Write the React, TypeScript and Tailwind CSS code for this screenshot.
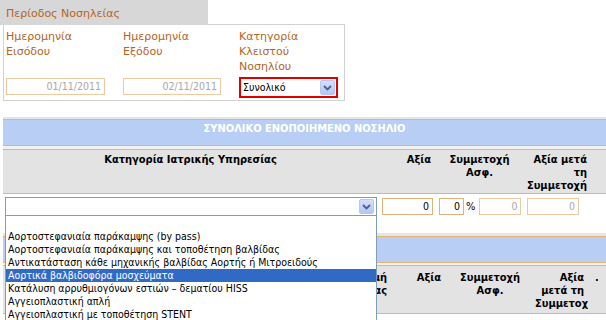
import React from "react";

const condensed = "font-['DejaVu_Sans_Condensed','Liberation_Sans',sans-serif]";

function DropButton() {
  return (
    <div className="flex h-[15px] w-[15px] items-center justify-center rounded-[2px] border border-[#b5c8f2] bg-gradient-to-b from-[#d3e0fd] to-[#b2c7f6]">
      <svg width="9" height="6" viewBox="0 0 9 6">
        <path d="M1 1 L4.5 4.5 L8 1" fill="none" stroke="#4d6185" strokeWidth="1.8" />
      </svg>
    </div>
  );
}

function Field({ value, w, muted }: { value: string; w: string; muted?: boolean }) {
  return (
    <div
      className={`${w} ${condensed} h-[17px] border bg-white pr-[3px] text-right text-[10.5px] leading-[15px] ${
        muted ? "border-[#ecc9a0] text-[#a8a8a8]" : "border-[#e0b27a] text-black"
      }`}
    >
      {value}
    </div>
  );
}

export default function App() {
  const items = [
    "",
    "Αορτοστεφανιαία παράκαμψης (by pass)",
    "Αορτοστεφανιαία παράκαμψης και τοποθέτηση βαλβίδας",
    "Αντικατάσταση κάθε μηχανικής βαλβίδας Αορτής ή Μιτροειδούς",
    "Αορτικά βαλβιδοφόρα μοσχεύματα",
    "Κατάλυση αρρυθμιογόνων εστιών – δεματίου HISS",
    "Αγγειοπλαστική απλή",
    "Αγγειοπλαστική με τοποθέτηση STENT",
  ];

  return (
    <div className="relative h-[320px] w-[606px] overflow-hidden bg-white font-['DejaVu_Sans','Liberation_Sans',sans-serif] text-[11px]">
      {/* period of stay */}
      <div className="flex">
        <div className="h-[25px] w-[208px] bg-[#d7d7d7] pl-[6px] pt-[6px] leading-[15px] text-[#b4641e]">
          Περίοδος Νοσηλείας
        </div>
        <div className="h-[25px] w-[137px] border-b border-[#d2d2d2]" />
      </div>
      <div className="ml-[3px] flex h-[76px] w-[342px] border-x border-b border-[#d2d2d2] pl-[2px] pt-[4px] leading-[15px] text-[#b4641e]">
        <div className="w-[117px]">
          <div className="h-[45px]">
            Ημερομηνία
            <br />
            Εισόδου
          </div>
          <div className="mt-[4px]">
            <Field value="01/11/2011" w="w-[99px]" muted />
          </div>
        </div>
        <div className="w-[116px]">
          <div className="h-[45px]">
            Ημερομηνία
            <br />
            Εξόδου
          </div>
          <div className="mt-[4px]">
            <Field value="02/11/2011" w="w-[98px]" muted />
          </div>
        </div>
        <div className="w-[100px]">
          <div className="h-[45px]">
            Κατηγορία
            <br />
            Κλειστού
            <br />
            Νοσηλίου
          </div>
          <div className="mt-[3px] flex h-[21px] w-[99px] items-center justify-between border-2 border-[#e00000] bg-white pl-[2px] pr-[1px]">
            <span className={`${condensed} text-[10.5px] text-black`}>Συνολικό</span>
            <DropButton />
          </div>
        </div>
      </div>

      {/* table 1 */}
      <div className="ml-[3px] mt-[16px]">
        <div className="h-[2px] bg-[#e6e6e6]" />
        <div
          className={`${condensed} h-[27px] border-y border-[#e8b272] bg-[#b8cef5] pt-[1px] text-center font-bold leading-[15px] text-white`}
        >
          ΣΥΝΟΛΙΚΟ ΕΝΟΠΟΙΗΜΕΝΟ ΝΟΣΗΛΙΟ
        </div>
        <div className="h-[3px] bg-[#f2f2f2]" />
        <div
          className={`${condensed} flex h-[45px] border-y border-[#e8b272] bg-[#e3e3e3] pt-[3px] font-bold leading-[13px] text-black`}
        >
          <div className="w-[375px] text-center">Κατηγορία Ιατρικής Υπηρεσίας</div>
          <div className="w-[58px] pr-[5px] text-right">Αξία</div>
          <div className="w-[87px] text-center">
            Συμμετοχή
            <br />
            Ασφ.
          </div>
          <div className="w-[67px] pr-[3px] text-right">
            Αξία μετά
            <br />
            τη
            <br />
            Συμμετοχή
          </div>
        </div>
        <div className="flex h-[39px] pt-[3px]">
          <div className="w-[375px] pl-[2px]">
            <div className="flex h-[19px] w-[372px] items-center justify-end border border-[#7f9db9] bg-white pr-[2px]">
              <DropButton />
            </div>
          </div>
          <div className="w-[58px] pl-[4px] pt-[1px]">
            <Field value="0" w="w-[51px]" />
          </div>
          <div className="flex w-[87px] items-start pl-[3px] pt-[1px]">
            <Field value="0" w="w-[25px]" />
            <span className={`${condensed} ml-[2px] mr-[4px] leading-[17px] text-black`}>%</span>
            <Field value="0" w="w-[42px]" muted />
          </div>
          <div className="w-[67px] pl-[4px] pt-[1px]">
            <Field value="0" w="w-[52px]" muted />
          </div>
        </div>

        {/* table 2, mostly under the open list */}
        <div className="h-[3px] bg-[#e6e6e6]" />
        <div className="h-[27px] border-y border-[#e8b272] bg-[#b8cef5]" />
        <div className="h-[2px] bg-[#f2f2f2]" />
        <div
          className={`${condensed} flex h-[49px] border-y border-[#e8b272] bg-[#e3e3e3] pt-[5px] font-bold leading-[13px] text-black`}
        >
          <div className="w-[327px]" />
          <div className="w-[59px] pr-[2px] text-right">
            Τιμή
            <br />
            Μονάδας
          </div>
          <div className="w-[56px] pr-[4px] text-right">Αξία</div>
          <div className="w-[90px] text-center">
            Συμμετοχή
            <br />
            Ασφ.
          </div>
          <div className="w-[53px] overflow-hidden pr-[4px] text-right">
            Αξία
            <br />
            μετά τη
            <br />
            Συμμετοχή
          </div>
          <div className="pl-[7px]">.</div>
        </div>
      </div>

      {/* open select list */}
      <div
        className={`${condensed} absolute left-[5px] top-[216px] w-[372px] border-x border-[#7f9db9] bg-white text-[10.5px] leading-[13px] text-black`}
      >
        {items.map((item, i) => (
          <div
            key={i}
            className={`${i === 0 ? "h-[14px]" : "h-[13px]"} whitespace-nowrap pl-[2px] ${
              i === 4 ? "bg-[#316ac5] text-white" : ""
            }`}
          >
            {item}
          </div>
        ))}
      </div>
    </div>
  );
}
